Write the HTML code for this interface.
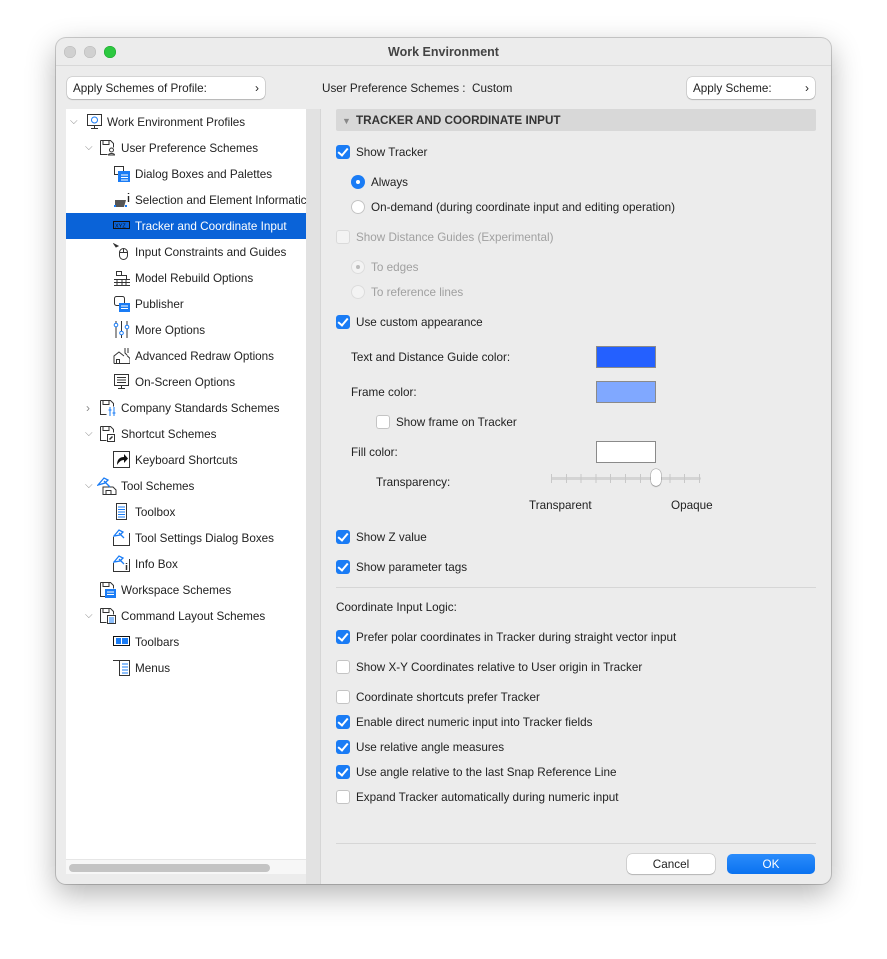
<!DOCTYPE html>
<html><head><meta charset="utf-8"><style>
*{box-sizing:border-box;margin:0;padding:0}
body{width:887px;height:959px;background:#fff;position:relative;overflow:hidden;font-family:"Liberation Sans",sans-serif;font-size:11.7px;color:#222}
.win{position:absolute;left:56px;top:38px;width:775px;height:846px;background:#ececec;border-radius:10px;box-shadow:0 10px 30px rgba(0,0,0,.3),0 0 0 1px rgba(0,0,0,.18);overflow:hidden}
.a{position:absolute;white-space:nowrap;line-height:14px;margin-top:1px}
.tl{position:absolute;top:8px;width:12px;height:12px;border-radius:50%}
.btn{position:absolute;background:#fff;border-radius:5px;box-shadow:0 0 0 .5px rgba(0,0,0,.2),0 1px 1px rgba(0,0,0,.15);height:22px;line-height:23px;padding-left:6px;font-size:11.7px}
.btn b{position:absolute;right:6px;top:0;font-weight:normal;font-size:12px}
.cb{position:absolute;width:14px;height:14px;border-radius:3px;background:#fff;box-shadow:inset 0 0 0 1px #c4c4c4}
.cb.on{background:#1a7cf5;box-shadow:none}
.cb.on:after{content:"";position:absolute;left:4px;top:1px;width:4px;height:8px;border:solid #fff;border-width:0 2px 2px 0;transform:rotate(40deg)}
.cb.dis{background:#f3f3f3;box-shadow:inset 0 0 0 1px #dadada}
.rd{position:absolute;width:14px;height:14px;border-radius:50%;background:#fff;box-shadow:inset 0 0 0 1px #c4c4c4}
.rd.on{background:#1a7cf5;box-shadow:none}
.rd.on:after{content:"";position:absolute;left:5px;top:5px;width:4px;height:4px;border-radius:50%;background:#fff}
.rd.dis{background:#f3f3f3;box-shadow:inset 0 0 0 1px #dcdcdc}
.rd.dison:after{content:"";position:absolute;left:5px;top:5px;width:4px;height:4px;border-radius:50%;background:#bbb}
.g{color:#a0a0a0}
.ic{position:absolute;width:17px;height:17px}
.chev{position:absolute;color:#888;font-size:10px}
.sw{position:absolute;width:60px;height:22px;border:1px solid #8a8a8a}
</style></head><body>
<div class="win">
 <div class="tl" style="left:8px;background:#d0d0d0;box-shadow:inset 0 0 0 .5px #b8b8b8"></div>
 <div class="tl" style="left:28px;background:#d0d0d0;box-shadow:inset 0 0 0 .5px #b8b8b8"></div>
 <div class="tl" style="left:48px;background:#2cc840;box-shadow:inset 0 0 0 .5px #1fa32f"></div>
 <div class="a" style="left:0;width:775px;text-align:center;top:6px;font-weight:bold;color:#444;font-size:12.5px">Work Environment</div>
 <div style="position:absolute;left:0;top:27px;width:775px;height:1px;background:#d8d8d8"></div>

 <div class="btn" style="left:11px;top:39px;width:198px">Apply Schemes of Profile:<b>›</b></div>
 <div class="a" style="left:266px;top:43px">User Preference Schemes :&nbsp;&nbsp;Custom</div>
 <div class="btn" style="left:631px;top:39px;width:128px">Apply Scheme:<b>›</b></div>

 <div style="position:absolute;left:10px;top:71px;width:240px;height:765px;background:#fff"></div>
 <div style="position:absolute;left:10px;top:821px;width:240px;height:15px;background:#f7f7f7;border-top:1px solid #e6e6e6"></div>
 <div style="position:absolute;left:13px;top:826px;width:201px;height:8px;border-radius:4px;background:#c4c4c4"></div>
 <div style="position:absolute;left:250px;top:71px;width:15px;height:775px;background:#e2e2e2;border-right:1px solid #d6d6d6"></div>
 <div style="position:absolute;left:10px;top:175px;width:240px;height:26px;background:#0a63d8"></div>
</div>

<div style="position:absolute;left:0;top:0">
 <span class="chev" style="left:70px;top:116px">⌵</span>
 <svg class="ic" style="left:86px;top:113px" viewBox="0 0 17 17" fill="none" stroke="#333"><rect x="1.5" y="1.5" width="14" height="11"/><path d="M5 15.5h7M8.5 12.5v3"/><circle cx="8.5" cy="7" r="3" stroke="#1a7cf5"/></svg>
 <div class="a" style="left:107px;top:115px">Work Environment Profiles</div>

 <span class="chev" style="left:85px;top:142px">⌵</span>
 <svg class="ic" style="left:99px;top:139px" viewBox="0 0 17 17" fill="none" stroke="#333"><path d="M1.5 1.5h10l3 3v4M1.5 1.5v14h7"/><rect x="4" y="1.5" width="6" height="4"/><circle cx="12.5" cy="11" r="2"/><path d="M9.5 16c0-2 6-2 6 0z"/></svg>
 <div class="a" style="left:121px;top:141px">User Preference Schemes</div>

 <svg class="ic" style="left:113px;top:165px" viewBox="0 0 17 17" fill="none" stroke="#333"><rect x="1.5" y="1.5" width="9" height="8"/><rect x="5.5" y="6.5" width="11" height="10" fill="#1a7cf5" stroke="#1a7cf5"/><path d="M8 10h7M8 12.5h7M8 15h7" stroke="#fff"/></svg>
 <div class="a" style="left:135px;top:167px">Dialog Boxes and Palettes</div>

 <svg class="ic" style="left:113px;top:191px" viewBox="0 0 17 17" fill="none"><path d="M2 9h11l-2 7H2z" fill="#555"/><rect x="1" y="14" width="2" height="2" fill="#1a7cf5"/><rect x="12" y="14" width="2" height="2" fill="#1a7cf5"/><path d="M15.5 2v1M15.5 5v6" stroke="#222" stroke-width="1.4"/></svg>
 <div class="a" style="left:135px;top:193px;width:171px;overflow:hidden">Selection and Element Informatic</div>

 <svg class="ic" style="left:113px;top:217px" viewBox="0 0 17 17" fill="none" stroke="#111"><rect x="0.5" y="4.5" width="16" height="7"/><text x="2" y="10.5" font-size="5.5" fill="#111" stroke="none" font-family="Liberation Sans">XYZ</text></svg>
 <div class="a" style="left:135px;top:219px;color:#fff">Tracker and Coordinate Input</div>

 <svg class="ic" style="left:113px;top:243px" viewBox="0 0 17 17" fill="none" stroke="#333"><path d="M1 1l4 2-2 1z" fill="#111"/><rect x="6.5" y="5.5" width="8" height="11" rx="4"/><path d="M10.5 5.5v4M6.5 9.5h8"/></svg>
 <div class="a" style="left:135px;top:245px">Input Constraints and Guides</div>

 <svg class="ic" style="left:113px;top:269px" viewBox="0 0 17 17" fill="none" stroke="#333"><path d="M1 16.5h16M1 13.5h16M1 10.5h16M4 10.5v6M9 10.5v6M13 10.5v6M3.5 2.5h5v4h-5zM8.5 6.5h5v4"/></svg>
 <div class="a" style="left:135px;top:271px">Model Rebuild Options</div>

 <svg class="ic" style="left:113px;top:295px" viewBox="0 0 17 17" fill="none" stroke="#333"><rect x="1.5" y="1.5" width="10" height="9" rx="2"/><rect x="6" y="8" width="11" height="9" fill="#1a7cf5" stroke="none"/><path d="M8 11h7M8 13.5h7" stroke="#fff"/></svg>
 <div class="a" style="left:135px;top:297px">Publisher</div>

 <svg class="ic" style="left:113px;top:321px" viewBox="0 0 17 17" fill="none" stroke="#333"><path d="M3 0v17M8.5 0v17M14 0v17"/><circle cx="3" cy="4" r="1.8" fill="#fff" stroke="#1a7cf5"/><circle cx="8.5" cy="12" r="1.8" fill="#fff" stroke="#1a7cf5"/><circle cx="14" cy="6" r="1.8" fill="#fff" stroke="#1a7cf5"/></svg>
 <div class="a" style="left:135px;top:323px">More Options</div>

 <svg class="ic" style="left:113px;top:347px" viewBox="0 0 17 17" fill="none" stroke="#333"><path d="M1 16.5V9l5-4 5 4M1 16.5h16v-5l-3-3M3.5 16.5v-4h3v4M12 1v5l2 2M15 1v5"/></svg>
 <div class="a" style="left:135px;top:349px">Advanced Redraw Options</div>

 <svg class="ic" style="left:113px;top:373px" viewBox="0 0 17 17" fill="none" stroke="#333"><rect x="1.5" y="1.5" width="14" height="11"/><path d="M4 4.5h9M4 7h9M4 9.5h9M5 15.5h7M8.5 12.5v3"/></svg>
 <div class="a" style="left:135px;top:375px">On-Screen Options</div>

 <span class="chev" style="left:86px;top:401px;font-size:12px">›</span>
 <svg class="ic" style="left:99px;top:399px" viewBox="0 0 17 17" fill="none" stroke="#333"><path d="M1.5 1.5h10l3 3v3M1.5 1.5v14h6"/><rect x="4" y="1.5" width="6" height="4"/><path d="M11 8v9M15 8v9" stroke="#1a7cf5"/><path d="M9.5 11h3M13.5 14h3" stroke="#1a7cf5"/></svg>
 <div class="a" style="left:121px;top:401px">Company Standards Schemes</div>

 <span class="chev" style="left:85px;top:428px">⌵</span>
 <svg class="ic" style="left:99px;top:425px" viewBox="0 0 17 17" fill="none" stroke="#333"><path d="M1.5 1.5h10l3 3v3M1.5 1.5v14h6"/><rect x="4" y="1.5" width="6" height="4"/><rect x="8.5" y="9.5" width="7" height="7"/><path d="M10.5 14.5l3-3" stroke-width="1.5"/></svg>
 <div class="a" style="left:121px;top:427px">Shortcut Schemes</div>

 <svg class="ic" style="left:113px;top:451px" viewBox="0 0 17 17" fill="none" stroke="#333"><rect x="0.5" y="0.5" width="16" height="16"/><path d="M4 14c0-6 3-8 7-8V3l4 4.5-4 4.5V9c-3 0-5 2-7 5z" fill="#111" stroke="none"/></svg>
 <div class="a" style="left:135px;top:453px">Keyboard Shortcuts</div>

 <span class="chev" style="left:85px;top:480px">⌵</span>
 <svg class="ic" style="left:97px;top:475px;width:20px;height:20px" viewBox="0 0 20 20" fill="none" stroke="#333"><path d="M6 19.5V12h10l3 3v4.5zM9 19.5v-4h5v4"/><path d="M1 10l6-7 4 2-3 3zM7 6l6 6" stroke="#1a7cf5" stroke-width="1.3"/></svg>
 <div class="a" style="left:121px;top:479px">Tool Schemes</div>

 <svg class="ic" style="left:113px;top:503px" viewBox="0 0 17 17" fill="none" stroke="#333"><rect x="3.5" y="0.5" width="10" height="16"/><path d="M5 4h7M5 6.5h7M5 9h7M5 11.5h7M5 14h7" stroke="#1a7cf5"/></svg>
 <div class="a" style="left:135px;top:505px">Toolbox</div>

 <svg class="ic" style="left:113px;top:529px" viewBox="0 0 17 17" fill="none" stroke="#333"><path d="M0.5 8v8.5h16V4"/><path d="M1 7l5-6 4 2-3 3zM6 4l5 5" stroke="#1a7cf5" stroke-width="1.3"/></svg>
 <div class="a" style="left:135px;top:531px">Tool Settings Dialog Boxes</div>

 <svg class="ic" style="left:113px;top:555px" viewBox="0 0 17 17" fill="none" stroke="#333"><path d="M0.5 8v8.5h16V4"/><path d="M1 7l5-6 4 2-3 3zM6 4l5 5" stroke="#1a7cf5" stroke-width="1.3"/><path d="M13.5 8v1M13.5 10v5" stroke-width="1.5"/></svg>
 <div class="a" style="left:135px;top:557px">Info Box</div>

 <svg class="ic" style="left:99px;top:581px" viewBox="0 0 17 17" fill="none" stroke="#333"><path d="M1.5 1.5h10l3 3v3M1.5 1.5v14h5"/><rect x="4" y="1.5" width="6" height="4"/><rect x="6" y="8" width="11" height="9" fill="#1a7cf5" stroke="none"/><path d="M8 11h7M8 13.5h7" stroke="#fff"/></svg>
 <div class="a" style="left:121px;top:583px">Workspace Schemes</div>

 <span class="chev" style="left:85px;top:610px">⌵</span>
 <svg class="ic" style="left:99px;top:607px" viewBox="0 0 17 17" fill="none" stroke="#333"><path d="M1.5 1.5h10l3 3v3M1.5 1.5v14h6"/><rect x="4" y="1.5" width="6" height="4"/><rect x="8.5" y="8.5" width="8" height="8"/><path d="M10 11h5M10 13h5M10 15h5" stroke="#1a7cf5"/></svg>
 <div class="a" style="left:121px;top:609px">Command Layout Schemes</div>

 <svg class="ic" style="left:113px;top:633px" viewBox="0 0 17 17" fill="none" stroke="#111"><rect x="0.5" y="3.5" width="16" height="9" fill="#fff"/><rect x="3" y="5" width="5" height="6" fill="#1a7cf5" stroke="none"/><rect x="9" y="5" width="6" height="6" fill="#1a7cf5" stroke="none"/></svg>
 <div class="a" style="left:135px;top:635px">Toolbars</div>

 <svg class="ic" style="left:113px;top:659px" viewBox="0 0 17 17" fill="none" stroke="#333"><path d="M0 1.5h17M6.5 1.5v15h10v-15"/><path d="M9 5h6M9 8h6M9 11h6M9 14h6" stroke="#1a7cf5"/></svg>
 <div class="a" style="left:135px;top:661px">Menus</div>
</div>

<div style="position:absolute;left:336px;top:109px;width:480px;height:22px;background:#d8d8d8;border-radius:2px"></div>
<div class="a" style="left:342px;top:113px;color:#888;font-size:9px">▼</div>
<div class="a" style="left:356px;top:113px;font-weight:bold;color:#333">TRACKER AND COORDINATE INPUT</div>

<div class="cb on" style="left:336px;top:145px"></div><div class="a" style="left:356px;top:145px">Show Tracker</div>
<div class="rd on" style="left:351px;top:175px"></div><div class="a" style="left:371px;top:175px">Always</div>
<div class="rd" style="left:351px;top:200px"></div><div class="a" style="left:371px;top:200px">On-demand (during coordinate input and editing operation)</div>
<div class="cb dis" style="left:336px;top:230px"></div><div class="a g" style="left:356px;top:230px">Show Distance Guides (Experimental)</div>
<div class="rd dis dison" style="left:351px;top:260px"></div><div class="a g" style="left:371px;top:260px">To edges</div>
<div class="rd dis" style="left:351px;top:285px"></div><div class="a g" style="left:371px;top:285px">To reference lines</div>
<div class="cb on" style="left:336px;top:315px"></div><div class="a" style="left:356px;top:315px">Use custom appearance</div>

<div class="a" style="left:351px;top:350px">Text and Distance Guide color:</div>
<div class="sw" style="left:596px;top:346px;background:#2460ff"></div>
<div class="a" style="left:351px;top:385px">Frame color:</div>
<div class="sw" style="left:596px;top:381px;background:#80a8ff"></div>
<div class="cb" style="left:376px;top:415px"></div><div class="a" style="left:396px;top:415px">Show frame on Tracker</div>
<div class="a" style="left:351px;top:445px">Fill color:</div>
<div class="sw" style="left:596px;top:441px;background:#fff"></div>
<div class="a" style="left:376px;top:475px">Transparency:</div>
<div style="position:absolute;left:551px;top:477px;width:150px;height:3px;background:#d4d4d4;border-radius:2px"></div>
<div style="position:absolute;left:551px;top:474px;width:150px;height:9px;background:repeating-linear-gradient(90deg,#c8c8c8 0 1px,transparent 1px 14.8px)"></div>
<div style="position:absolute;left:651px;top:469px;width:10px;height:17px;background:#fff;border-radius:5px;box-shadow:0 0 0 .5px rgba(0,0,0,.3),0 1px 1px rgba(0,0,0,.2)"></div>
<div class="a" style="left:529px;top:498px">Transparent</div>
<div class="a" style="left:671px;top:498px">Opaque</div>

<div class="cb on" style="left:336px;top:530px"></div><div class="a" style="left:356px;top:530px">Show Z value</div>
<div class="cb on" style="left:336px;top:560px"></div><div class="a" style="left:356px;top:560px">Show parameter tags</div>
<div style="position:absolute;left:336px;top:587px;width:480px;height:1px;background:#d6d6d6"></div>
<div class="a" style="left:336px;top:600px">Coordinate Input Logic:</div>
<div class="cb on" style="left:336px;top:630px"></div><div class="a" style="left:356px;top:630px">Prefer polar coordinates in Tracker during straight vector input</div>
<div class="cb" style="left:336px;top:660px"></div><div class="a" style="left:356px;top:660px">Show X-Y Coordinates relative to User origin in Tracker</div>
<div class="cb" style="left:336px;top:690px"></div><div class="a" style="left:356px;top:690px">Coordinate shortcuts prefer Tracker</div>
<div class="cb on" style="left:336px;top:715px"></div><div class="a" style="left:356px;top:715px">Enable direct numeric input into Tracker fields</div>
<div class="cb on" style="left:336px;top:740px"></div><div class="a" style="left:356px;top:740px">Use relative angle measures</div>
<div class="cb on" style="left:336px;top:765px"></div><div class="a" style="left:356px;top:765px">Use angle relative to the last Snap Reference Line</div>
<div class="cb" style="left:336px;top:790px"></div><div class="a" style="left:356px;top:790px">Expand Tracker automatically during numeric input</div>

<div style="position:absolute;left:336px;top:843px;width:480px;height:1px;background:#d6d6d6"></div>
<div style="position:absolute;left:627px;top:854px;width:88px;height:20px;background:#fff;border-radius:5px;box-shadow:0 0 0 .5px rgba(0,0,0,.2),0 1px 1px rgba(0,0,0,.15);text-align:center;line-height:21px">Cancel</div>
<div style="position:absolute;left:727px;top:854px;width:88px;height:20px;background:linear-gradient(#2b8cfb,#0a72f0);border-radius:5px;color:#fff;text-align:center;line-height:21px">OK</div>
</body></html>
